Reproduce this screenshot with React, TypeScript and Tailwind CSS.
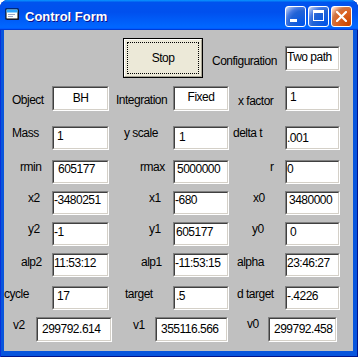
import React from "react";

const F = "font-['Liberation_Sans',Arial,sans-serif]";

function Box({
  w,
  h = "h-[24px]",
  text,
  cls = "",
}: {
  w: string;
  h?: string;
  text: string;
  cls?: string;
}) {
  return (
    <div
      className={`${w} ${h} shrink-0 border border-t-[#808080] border-l-[#808080] border-b-white border-r-white`}
    >
      <div
        className={`h-full bg-white border border-t-[#404040] border-l-[#404040] border-b-[#d4d0c8] border-r-[#d4d0c8] leading-[14px] whitespace-nowrap overflow-hidden ${cls}`}
      >
        {text}
      </div>
    </div>
  );
}

function Label({ w, text, cls = "" }: { w: string; text: string; cls?: string }) {
  return (
    <div className={`${w} shrink-0 leading-[14px] whitespace-nowrap ${cls}`}>{text}</div>
  );
}

function TitleIcon() {
  return (
    <svg width="16" height="16" viewBox="0 0 16 16">
      <rect x="2" y="3" width="12" height="10" fill="#1a2a6a" />
      <rect x="1" y="2" width="12" height="10" fill="#ffffff" stroke="#000000" strokeWidth="1" />
      <rect x="1.5" y="2.5" width="11" height="3" fill="#2fa6ff" />
      <rect x="3" y="7" width="7" height="1" fill="#9aa6c8" />
      <rect x="3" y="9" width="5" height="1" fill="#9aa6c8" />
    </svg>
  );
}

export default function App() {
  return (
    <div className={`w-[358px] h-[357px] bg-white ${F} text-black`}>
      <div className="w-[358px] h-[357px] rounded-t-[8px] bg-[#0855dd] flex flex-col overflow-hidden shadow-[inset_1px_0_0_#0831d9,inset_-1px_0_0_#00138c,inset_0_-1px_0_#00138c]">
        {/* Title bar */}
        <div className="h-[30px] shrink-0 flex items-start bg-[linear-gradient(180deg,#0997ff,#0053ee_8%,#0050ee_40%,#06f_88%,#06f_93%,#005bff_95%,#003dd7_96%,#003dd7)] pl-[5px] pr-[6px]">
          <div className="mt-[7px]">
            <TitleIcon />
          </div>
          <div className="ml-[4px] mt-[9px] text-[13px] leading-[15px] font-bold text-white [text-shadow:1px_1px_#0f1089]">
            Control Form
          </div>
          <div className="flex-1" />
          <div className="flex gap-[2px] mt-[6px]">
            <div className="w-[21px] h-[21px] rounded-[3px] border border-white bg-[radial-gradient(circle_at_90%_90%,#0054e9_0%,#2263d5_55%,#4479e4_70%,#a3bbec_90%,#fff_100%)] relative">
              <div className="absolute left-[4px] top-[12px] w-[7px] h-[3px] bg-white" />
            </div>
            <div className="w-[21px] h-[21px] rounded-[3px] border border-white bg-[radial-gradient(circle_at_90%_90%,#0054e9_0%,#2263d5_55%,#4479e4_70%,#a3bbec_90%,#fff_100%)] relative">
              <div className="absolute left-[4px] top-[3px] w-[11px] h-[11px] border border-white border-t-[3px]" />
            </div>
            <div className="w-[21px] h-[21px] rounded-[3px] border border-white bg-[radial-gradient(circle_at_90%_90%,#cc4600_0%,#dc6527_55%,#cd7546_70%,#ffccb2_90%,#fff_100%)] flex items-center justify-center">
              <svg width="11" height="11" viewBox="0 0 11 11">
                <path d="M1 1 L10 10 M10 1 L1 10" stroke="#fff" strokeWidth="2.2" strokeLinecap="square" />
              </svg>
            </div>
          </div>
        </div>

        {/* Client */}
        <div className="flex-1 flex pl-[4px] pr-[5px] pb-[6px]">
          <div className="flex-1 bg-[#c0c0c0] pt-[8px] flex flex-col text-[12px] tracking-[-0.5px]">
            {/* Row 0 */}
            <div className="flex items-start">
              <div className="w-[119px] shrink-0" />
              <div className="w-[80px] h-[40px] shrink-0 border border-black bg-[#ece9d8]">
                <div className="h-full border border-t-white border-l-white border-b-[#aca899] border-r-[#aca899] p-[2px]">
                  <div className="h-full border border-dotted border-black flex items-center justify-center leading-[14px]">
                    Stop
                  </div>
                </div>
              </div>
              <Label w="w-[82px]" text="Configuration" cls="pl-[9px] pt-[16px]" />
              <div className="mt-[8px]">
                <Box w="w-[55px]" h="h-[25px]" text="Two path" cls="pl-[0px] pt-[2px]" />
              </div>
            </div>

            {/* Row 1 */}
            <div className="flex items-start mt-[8px]">
              <Label w="w-[48px]" text="Object" cls="pl-[8px] pt-[7px]" />
              <Box w="w-[57px]" h="h-[25px]" text="BH" cls="text-center pt-[3px]" />
              <Label w="w-[64px]" text="Integration" cls="pl-[7px] pt-[7px]" />
              <Box w="w-[56px]" h="h-[25px]" text="Fixed" cls="text-center pt-[2px]" />
              <Label w="w-[56px]" text="x factor" cls="pl-[9px] pt-[8px]" />
              <Box w="w-[55px]" h="h-[25px]" text="1" cls="pl-[3px] pt-[2px]" />
            </div>

            {/* Row 2 */}
            <div className="flex items-start mt-[15px]">
              <Label w="w-[48px]" text="Mass" cls="pl-[8px]" />
              <Box w="w-[57px]" text="1" cls="pl-[3px] pt-[1px]" />
              <Label w="w-[64px]" text="y scale" cls="pl-[15px]" />
              <Box w="w-[56px]" text="1" cls="pl-[4px] pt-[2px]" />
              <Label w="w-[56px]" text="delta t" cls="pl-[4px]" />
              <Box w="w-[55px]" text=".001" cls="pl-[0px] pt-[3px]" />
            </div>

            {/* Row 3 */}
            <div className="flex items-start mt-[10px]">
              <Label w="w-[48px]" text="rmin" cls="pl-[16px]" />
              <Box w="w-[57px]" text="605177" cls="pl-[4px]" />
              <Label w="w-[64px]" text="rmax" cls="pl-[31px]" />
              <Box w="w-[56px]" text="5000000" cls="pl-[2px]" />
              <Label w="w-[56px]" text="r" cls="pl-[41px]" />
              <Box w="w-[55px]" text="0" cls="pl-[0px]" />
            </div>

            {/* Row 4 */}
            <div className="flex items-start mt-[7px]">
              <Label w="w-[48px]" text="x2" cls="pl-[24px]" />
              <Box w="w-[57px]" text="-3480251" cls="pl-[0px]" />
              <Label w="w-[64px]" text="x1" cls="pl-[40px]" />
              <Box w="w-[56px]" text="-680" cls="pl-[0px]" />
              <Label w="w-[56px]" text="x0" cls="pl-[24px]" />
              <Box w="w-[55px]" text="3480000" cls="pl-[2px]" />
            </div>

            {/* Row 5 */}
            <div className="flex items-start mt-[7px]">
              <Label w="w-[48px]" text="y2" cls="pl-[24px]" />
              <Box w="w-[57px]" text="-1" cls="pl-[0px] pt-[1px]" />
              <Label w="w-[64px]" text="y1" cls="pl-[40px]" />
              <Box w="w-[56px]" text="605177" cls="pl-[1px] pt-[1px]" />
              <Label w="w-[56px]" text="y0" cls="pl-[23px]" />
              <Box w="w-[55px]" text="0" cls="pl-[3px] pt-[1px]" />
            </div>

            {/* Row 6 */}
            <div className="flex items-start mt-[7px]">
              <Label w="w-[48px]" text="alp2" cls="pl-[17px] pt-[2px]" />
              <Box w="w-[57px]" text="11:53:12" cls="pl-[0px] pt-[1px]" />
              <Label w="w-[64px]" text="alp1" cls="pl-[32px] pt-[2px]" />
              <Box w="w-[56px]" text="-11:53:15" cls="pl-[0px] pt-[1px]" />
              <Label w="w-[56px]" text="alpha" cls="pl-[8px] pt-[2px]" />
              <Box w="w-[55px]" text="23:46:27" cls="pl-[0px] pt-[1px]" />
            </div>

            {/* Row 7 */}
            <div className="flex items-start mt-[9px]">
              <Label w="w-[48px]" text="cycle" cls="pl-[0px] pt-[1px]" />
              <Box w="w-[57px]" text="17" cls="pl-[3px] pt-[1px]" />
              <Label w="w-[64px]" text="target" cls="pl-[16px] pt-[1px]" />
              <Box w="w-[56px]" text=".5" cls="pl-[1px] pt-[1px]" />
              <Label w="w-[56px]" text="d target" cls="pl-[8px] pt-[1px]" />
              <Box w="w-[55px]" text="-.4226" cls="pl-[0px] pt-[1px]" />
            </div>

            {/* Row 8 */}
            <div className="flex items-start mt-[7px]">
              <Label w="w-[32px]" text="v2" cls="pl-[9px] pt-[1px]" />
              <Box w="w-[76px]" h="h-[25px]" text="299792.614" cls="pl-[4px] pt-[3px]" />
              <Label w="w-[43px]" text="v1" cls="pl-[21px] pt-[1px]" />
              <Box w="w-[73px]" h="h-[25px]" text="355116.566" cls="pl-[4px] pt-[3px]" />
              <Label w="w-[40px]" text="v0" cls="pl-[19px]" />
              <Box w="w-[69px]" h="h-[25px]" text="299792.458" cls="pl-[4px] pt-[3px]" />
            </div>
          </div>
        </div>
      </div>
    </div>
  );
}
